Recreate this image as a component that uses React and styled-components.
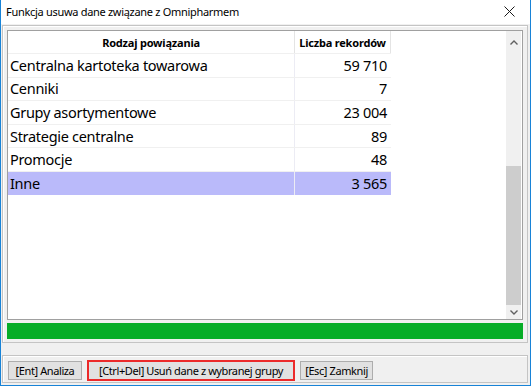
import React from 'react';
import styled, {createGlobalStyle, css} from 'styled-components';

const GlobalStyle = createGlobalStyle`
    *, *::before, *::after {
        box-sizing: border-box;
    }
    html, body {
        margin: 0;
        padding: 0;
        background: #ffffff;
    }
    body {
        font-family: "Noto Sans", "DejaVu Sans", sans-serif;
        color: #000000;
    }
`;

const rows = [
    {name: 'Centralna kartoteka towarowa', count: '59 710'},
    {name: 'Cenniki', count: '7'},
    {name: 'Grupy asortymentowe', count: '23 004'},
    {name: 'Strategie centralne', count: '89'},
    {name: 'Promocje', count: '48'},
    {name: 'Inne', count: '3 565', selected: true},
];

class App extends React.Component {

    render() {
        return (
            <Window>
                <GlobalStyle />
                <TitleBar>
                    <Title>Funkcja usuwa dane związane z Omnipharmem</Title>
                    <CloseButton>
                        <svg width="11" height="11" viewBox="0 0 11 11">
                            <path d="M0.5 0.5 L10.5 10.5 M10.5 0.5 L0.5 10.5" stroke="#1a1a1a" strokeWidth="1" fill="none" />
                        </svg>
                    </CloseButton>
                </TitleBar>
                <Body>
                    <Frame>
                        <Grid>
                            <Table>
                                <HeaderRow>
                                    <HeaderCell wide>Rodzaj powiązania</HeaderCell>
                                    <HeaderCell>Liczba rekordów</HeaderCell>
                                </HeaderRow>
                                {
                                    rows.map(item => {
                                        return (
                                            <Row key={item.name} selected={item.selected}>
                                                <Cell wide>{item.name}</Cell>
                                                <Cell right>{item.count}</Cell>
                                            </Row>
                                        );
                                    })
                                }
                            </Table>
                            <ScrollBar>
                                <Arrow up>
                                    <svg width="8" height="5" viewBox="0 0 8 5">
                                        <path d="M0.5 4.5 L4 1 L7.5 4.5" stroke="#606060" strokeWidth="1.4" fill="none" />
                                    </svg>
                                </Arrow>
                                <Track>
                                    <Thumb />
                                </Track>
                                <Arrow>
                                    <svg width="8" height="5" viewBox="0 0 8 5">
                                        <path d="M0.5 0.5 L4 4 L7.5 0.5" stroke="#606060" strokeWidth="1.4" fill="none" />
                                    </svg>
                                </Arrow>
                            </ScrollBar>
                        </Grid>
                        <Progress />
                    </Frame>
                    <ButtonBar>
                        <Button w="74px">[Ent] Analiza</Button>
                        <Button w="208px" danger>[Ctrl+Del] Usuń dane z wybranej grupy</Button>
                        <Button w="73px">[Esc] Zamknij</Button>
                    </ButtonBar>
                </Body>
            </Window>
        );
    }
}

const Window = styled.div`
    width: 531px;
    height: 386px;
    border: 1px solid #1883d7;
    border-top: none;
    display: flex;
    flex-direction: column;
    background: #f0f0f0;
    overflow: hidden;
`;

const TitleBar = styled.div`
    height: 24px;
    flex-shrink: 0;
    background: #ffffff;
    display: flex;
    align-items: center;
    justify-content: space-between;
    padding: 0 15px 1px 5px;
`;

const Title = styled.span`
    font-size: 11px;
    letter-spacing: -0.3px;
    color: #000000;
`;

const CloseButton = styled.div`
    display: flex;
    align-items: center;
`;

const Body = styled.div`
    flex: 1;
    display: flex;
    flex-direction: column;
    padding: 1px 2px 2px 1px;
`;

const Frame = styled.div`
    height: 318px;
    flex-shrink: 0;
    border: 1px solid #c4c4c4;
    box-shadow: inset 1px 1px 0 #ffffff;
    padding: 4px 4px 3px 4px;
    display: flex;
    flex-direction: column;
    gap: 3px;
`;

const Grid = styled.div`
    flex: 1;
    border: 1px solid #a0a0a0;
    background: #ffffff;
    display: flex;
`;

const Table = styled.div`
    flex: 1;
    display: flex;
    flex-direction: column;
`;

const HeaderRow = styled.div`
    display: flex;
    height: 22px;
`;

const HeaderCell = styled.div`
    width: ${props => props.wide ? '287px' : '96px'};
    border-right: 1px solid #e4e4e4;
    display: flex;
    align-items: center;
    justify-content: center;
    font-size: 11px;
    font-weight: bold;
    letter-spacing: -0.2px;
`;

const Row = styled.div`
    display: flex;
    height: 23.6px;
    width: 383px;
    border-top: 1px solid #f0f0f0;

    ${props => props.selected && css`
        background: #babafa;
    `}
`;

const Cell = styled.div`
    width: ${props => props.wide ? '287px' : '96px'};
    border-right: 1px solid ${props => props.wide ? '#ececf4' : 'transparent'};
    display: flex;
    align-items: center;
    padding: 0 ${props => props.right ? '3px' : '0'} 1px ${props => props.wide ? '2px' : '0'};
    justify-content: ${props => props.right ? 'flex-end' : 'flex-start'};
    font-size: 14.5px;
    letter-spacing: -0.3px;
`;

const ScrollBar = styled.div`
    width: 15px;
    margin-right: 1px;
    background: #f0f0f0;
    display: flex;
    flex-direction: column;
`;

const Arrow = styled.div`
    height: ${props => props.up ? '22px' : '14px'};
    display: flex;
    align-items: center;
    justify-content: center;
`;

const Track = styled.div`
    flex: 1;
    display: flex;
    flex-direction: column;
    justify-content: flex-end;
`;

const Thumb = styled.div`
    height: 139px;
    background: #cdcdcd;
`;

const Progress = styled.div`
    height: 16px;
    flex-shrink: 0;
    background: #06ad27;
`;

const ButtonBar = styled.div`
    margin-top: 12px;
    height: 28px;
    flex-shrink: 0;
    border: 1px solid #c4c4c4;
    box-shadow: inset 1px 1px 0 #ffffff;
    display: flex;
    align-items: flex-start;
    gap: 5px;
    padding: 5px 5px 0 5px;
`;

const Button = styled.div`
    width: ${props => props.w};
    height: 19px;
    border: 1px solid #adadad;
    background: #e1e1e1;
    display: flex;
    align-items: center;
    justify-content: center;
    font-size: 11px;
    letter-spacing: -0.4px;

    ${props => props.danger && css`
        height: 21px;
        margin-top: -1px;
        border: 2px solid #ec2a2a;
    `}
`;

export default App;
